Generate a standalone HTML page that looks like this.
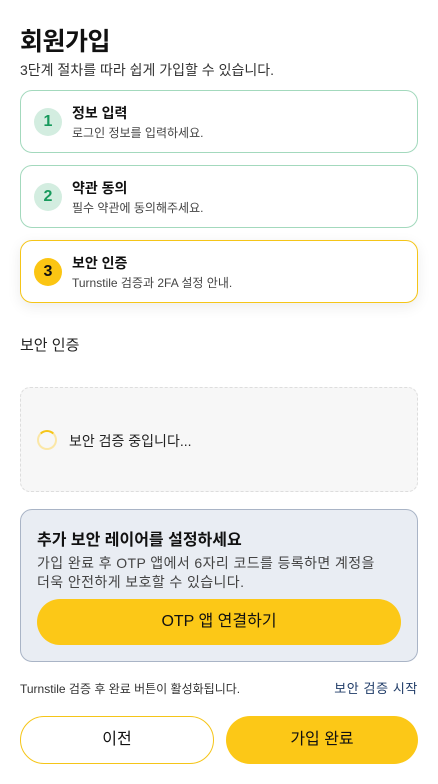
<!DOCTYPE html>
<html><head><meta charset="utf-8"><style>
*{box-sizing:border-box;margin:0;padding:0}
body{width:438px;height:784px;background:#fff;font-family:"Liberation Sans","Noto Sans CJK KR",sans-serif;color:#111;position:relative;overflow:hidden;word-break:keep-all}
.abs{position:absolute}
h1{position:absolute;left:20px;top:22px;font-size:25px;font-weight:700;letter-spacing:-0.5px}
.sub{left:20px;top:60px;font-size:14px;color:#333}
.step{position:absolute;left:20px;width:398px;height:63px;border:1px solid #a3d9bd;border-radius:12px;background:#fff}
.step .n{position:absolute;left:13px;top:17px;width:28px;height:28px;border-radius:50%;background:#d3ede0;color:#179a5c;font-weight:700;font-size:16px;text-align:center;line-height:28px}
.step .t{position:absolute;left:51px;top:12px;font-size:14px;font-weight:700}
.step .d{position:absolute;left:51px;top:33px;font-size:12px;color:#444}
.step.a{border-color:#f5c518;box-shadow:0 4px 14px rgba(0,0,0,0.08)}
.step.a .n{background:#fbc513;color:#111}
</style></head><body>
<h1>회원가입</h1>
<div class="abs sub">3단계 절차를 따라 쉽게 가입할 수 있습니다.</div>
<div class="step" style="top:90px"><div class="n">1</div><div class="t">정보 입력</div><div class="d">로그인 정보를 입력하세요.</div></div>
<div class="step" style="top:165px"><div class="n">2</div><div class="t">약관 동의</div><div class="d">필수 약관에 동의해주세요.</div></div>
<div class="step a" style="top:240px"><div class="n">3</div><div class="t">보안 인증</div><div class="d">Turnstile 검증과 2FA 설정 안내.</div></div>
<div class="abs" style="left:20px;top:334px;font-size:15px;color:#222">보안 인증</div>
<div class="abs" style="left:20px;top:387px;width:398px;height:105px;border:1px dashed #ddd;border-radius:10px;background:#f7f7f7"></div>
<div class="abs" style="left:37px;top:430px;width:20px;height:20px;border-radius:50%;border:2px solid #fbe7a6;border-top-color:#f5c518"></div>
<div class="abs" style="left:69px;top:431px;font-size:14px;color:#222">보안 검증 중입니다...</div>
<div class="abs" style="left:20px;top:509px;width:398px;height:153px;border:1px solid #a9b4c6;border-radius:12px;background:#e9edf3"></div>
<div class="abs" style="left:37px;top:526px;font-size:16px;font-weight:700">추가 보안 레이어를 설정하세요</div>
<div class="abs" style="left:37px;top:554px;font-size:14px;color:#444;line-height:19px;width:362px;letter-spacing:0.4px">가입 완료 후 OTP 앱에서 6자리 코드를 등록하면 계정을 더욱 안전하게 보호할 수 있습니다.</div>
<div class="abs" style="left:37px;top:599px;width:364px;height:46px;border-radius:23px;background:#fcc817;text-align:center;line-height:46px;font-size:16px">OTP 앱 연결하기</div>
<div class="abs" style="left:20px;top:680px;font-size:12px;color:#333">Turnstile 검증 후 완료 버튼이 활성화됩니다.</div>
<div class="abs" style="right:20px;top:678px;font-size:13px;color:#1f3b67;letter-spacing:0.6px">보안 검증 시작</div>
<div class="abs" style="left:20px;top:716px;width:194px;height:48px;border:1px solid #f5c518;border-radius:24px;text-align:center;line-height:46px;font-size:16px">이전</div>
<div class="abs" style="left:226px;top:716px;width:192px;height:48px;border-radius:24px;background:#fcc817;text-align:center;line-height:48px;font-size:16px">가입 완료</div>
</body></html>
